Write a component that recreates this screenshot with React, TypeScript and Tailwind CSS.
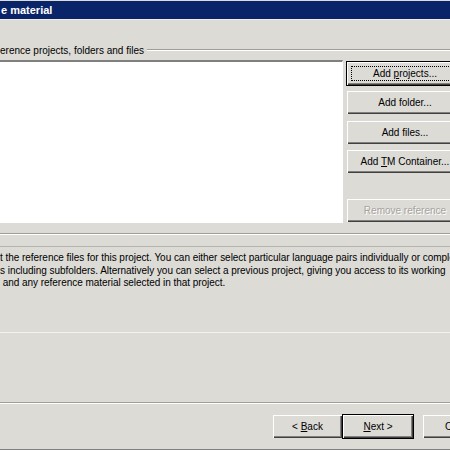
const raised =
  "shadow-[inset_1px_1px_0_#ffffff,inset_-1px_-1px_0_#404040,inset_-2px_-2px_0_#808080]";

type BtnProps = {
  children: React.ReactNode;
  focused?: boolean;
  isDefault?: boolean;
  disabled?: boolean;
  className?: string;
};

const Button = ({ children, focused, isDefault, disabled, className = "" }: BtnProps) => (
  <div
    className={`relative flex h-[23px] shrink-0 items-center justify-center bg-[#dcdbd6] ${raised} ${
      focused || isDefault ? "outline outline-1 outline-black" : ""
    } ${disabled ? "text-[#a5a39e] [text-shadow:1px_1px_0_#ffffff]" : "text-black"} ${className}`}
  >
    {focused && <div className="pointer-events-none absolute inset-[4px] border border-dotted border-black" />}
    <span className="whitespace-nowrap">{children}</span>
  </div>
);

export default function App() {
  return (
    <div className="relative h-[450px] w-[450px] overflow-hidden bg-[#dcdbd6] font-['Liberation_Sans',Tahoma,sans-serif] text-[10px] leading-[12px] text-black">
      {/* title bar */}
      <div className="mt-px h-[18px] bg-[#0a246a] pl-px text-[11px] font-bold leading-[18px] text-white">
        e material
      </div>
      <div className="h-px bg-[#eeede9]" />

      {/* group box */}
      <div className="mt-[25px] flex items-center">
        <span className="whitespace-nowrap pr-[3px]">erence projects, folders and files</span>
        <div className="-mt-[2px] flex-1 border-t border-b border-t-[#a09e98] border-b-white" />
      </div>

      <div className="mt-[3px] flex h-[163px]">
        <div className="min-w-0 flex-1 border-t-2 border-r border-b border-t-[#808080] border-r-white border-b-white bg-white" />
        <div className="-mr-[13px] ml-[4px] flex w-[116px] shrink-0 flex-col">
          <Button focused className="mt-[2px]">
            Add <u>p</u>rojects...
          </Button>
          <Button className="mt-[6px]">Add folder...</Button>
          <Button className="mt-[7px]">Add files...</Button>
          <Button className="mt-[6px]">
            Add <u>T</u>M Container...
          </Button>
          <Button disabled className="mt-[26px]">
            Remove reference
          </Button>
        </div>
      </div>

      <div className="mt-[10px] border-t border-b border-t-[#a09e98] border-b-white" />

      {/* description */}
      <div className="mt-[11px] h-[87px] border-t border-b border-t-[#b4b2ac] border-b-[#f4f3f0] pt-[5px] leading-[12.5px] tracking-[-0.04px]">
        <div className="whitespace-nowrap">
          t the reference files for this project. You can either select particular language pairs individually or comple
        </div>
        <div className="whitespace-nowrap">
          s including subfolders. Alternatively you can select a previous project, giving you access to its working
        </div>
        <div className="whitespace-nowrap">&nbsp;and any reference material selected in that project.</div>
      </div>

      {/* separator */}
      <div className="mt-[69px] border-t border-b border-t-[#a09e98] border-b-white" />

      <div className="mt-[11px] flex">
        <Button className="ml-[273px] w-[69px]">
          &lt; <u>B</u>ack
        </Button>
        <Button isDefault className="ml-px w-[70px]">
          <u>N</u>ext &gt;
        </Button>
        <Button className="ml-[10px] w-[75px]">Cancel</Button>
      </div>

      <div className="absolute inset-x-0 bottom-0 h-px bg-[#808080]" />
    </div>
  );
}
